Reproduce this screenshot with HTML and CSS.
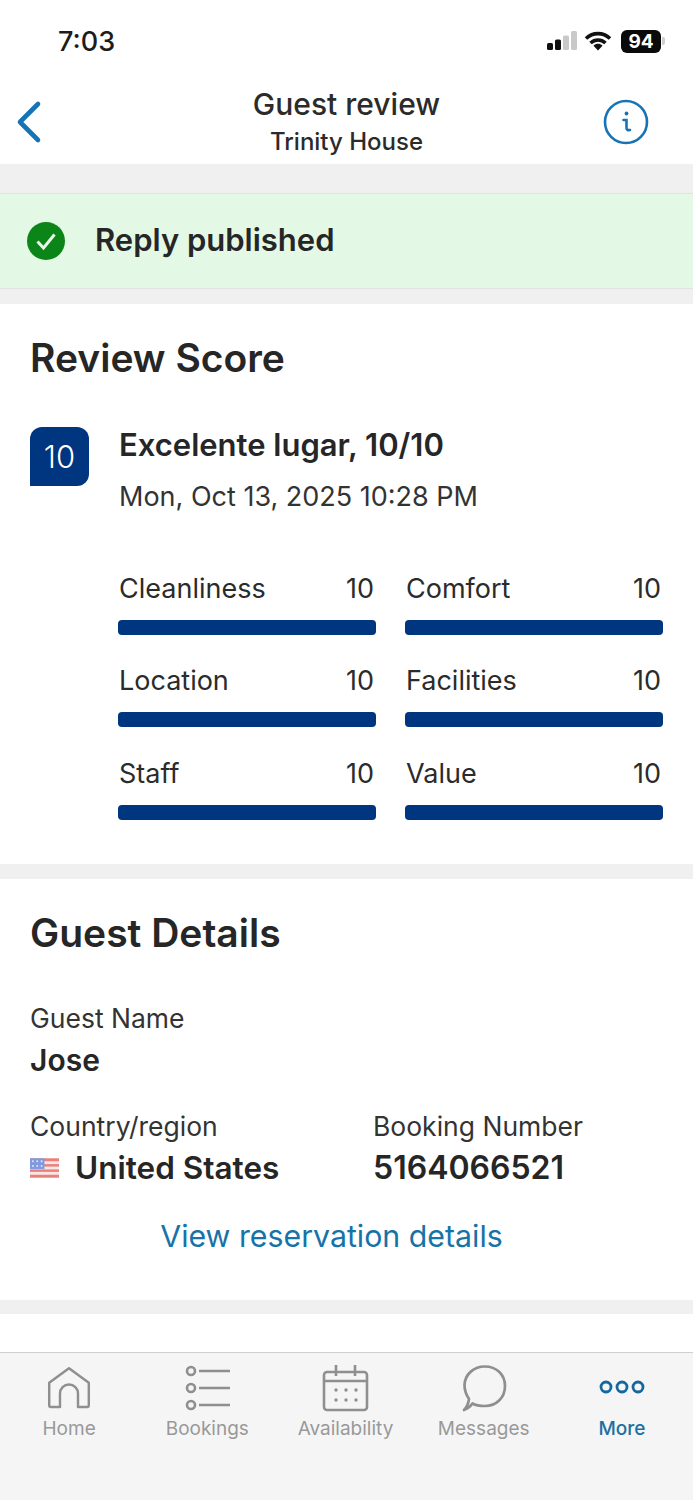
FILE: index.html
```html
<!DOCTYPE html>
<html lang="en">
<head>
<meta charset="utf-8">
<title>Guest review</title>
<link rel="stylesheet" href="styles.css">
</head>
<body>
<div class="app">
  <div class="status">
    <span class="time">7:03</span>
    <div class="status-icons">
      <svg class="signal" width="32" height="22" viewBox="0 0 32 22"><rect x="1" y="13" width="6" height="7" rx="1.5" fill="#111"/><rect x="9" y="9.500" width="6" height="10.500" rx="1.500" fill="#111"/><rect x="17" y="5.500" width="6" height="14.500" rx="1.500" fill="#c9c9c9"/><rect x="25" y="1" width="6" height="19" rx="1.500" fill="#c9c9c9"/></svg>
      <svg class="wifi" width="28" height="22" viewBox="0 0 28 22"><path d="M2 8.500C9 2 19 2 26 8.500M6.500 13C11 9 17 9 21.500 13" fill="none" stroke="#111" stroke-width="3.600"/><path d="M9.500 15.800C12 13.200 16 13.200 18.500 15.800L14 20.500Z" fill="#111"/></svg>
      <span class="battery">94</span>
      <span class="battery-tip"></span>
    </div>
  </div>
  <header class="nav">
    <svg class="back" width="30" height="46" viewBox="0 0 30 46"><path d="M25 5 L7 23 L25 41" fill="none" stroke="#1673b5" stroke-width="4.600" stroke-linecap="round" stroke-linejoin="round"/></svg>
    <div class="nav-title">
      <div class="nav-main">Guest review</div>
      <div class="nav-sub">Trinity House</div>
    </div>
    <svg class="info" width="46" height="46" viewBox="0 0 46 46"><circle cx="23" cy="23" r="21" fill="none" stroke="#1673b5" stroke-width="2.600"/><circle cx="23.500" cy="14.500" r="1.900" fill="#1673b5"/><path d="M20.500 21 H23.500 V29 Q23.500 31.500 27 31" fill="none" stroke="#1673b5" stroke-width="2.600" stroke-linecap="round"/></svg>
  </header>
  <div class="banner">
    <svg class="check" width="38" height="38" viewBox="0 0 38 38"><circle cx="19" cy="19" r="19" fill="#0c8518"/><path d="M10.500 19.500 L16.500 26 L27.500 12.500" fill="none" stroke="#e8f8e8" stroke-width="3"/></svg>
    <span class="banner-text">Reply published</span>
  </div>
  <section class="card score-card">
    <h2 class="card-title">Review Score</h2>
    <div class="review">
      <div class="badge">10</div>
      <div class="review-body">
        <div class="review-title">Excelente lugar, 10/10</div>
        <div class="review-date">Mon, Oct 13, 2025 10:28 PM</div>
        <div class="bars">
          <div class="metric"><div class="metric-head"><span>Cleanliness</span><span>10</span></div><div class="bar"></div></div>
          <div class="metric"><div class="metric-head"><span>Comfort</span><span>10</span></div><div class="bar"></div></div>
          <div class="metric"><div class="metric-head"><span>Location</span><span>10</span></div><div class="bar"></div></div>
          <div class="metric"><div class="metric-head"><span>Facilities</span><span>10</span></div><div class="bar"></div></div>
          <div class="metric"><div class="metric-head"><span>Staff</span><span>10</span></div><div class="bar"></div></div>
          <div class="metric"><div class="metric-head"><span>Value</span><span>10</span></div><div class="bar"></div></div>
        </div>
      </div>
    </div>
  </section>
  <section class="card details-card">
    <h2 class="card-title">Guest Details</h2>
    <div class="field name-field">
      <div class="field-label">Guest Name</div>
      <div class="field-value">Jose</div>
    </div>
    <div class="field-row">
      <div class="field">
        <div class="field-label">Country/region</div>
        <div class="field-value country">
          <svg class="flag" width="29" height="20" viewBox="0 0 30 20"><rect width="30" height="20" fill="#f7e6e2"/><g fill="#ea7f7c"><rect y="0" width="30" height="3"/><rect y="6" width="30" height="2.500"/><rect y="11.500" width="30" height="2.500"/><rect y="17" width="30" height="3"/></g><rect width="15" height="11" fill="#7f9be0"/><g fill="#dfe6f7"><circle cx="3" cy="3" r="1"/><circle cx="7.500" cy="3" r="1"/><circle cx="12" cy="3" r="1"/><circle cx="3" cy="8" r="1"/><circle cx="7.500" cy="8" r="1"/><circle cx="12" cy="8" r="1"/></g></svg>
          <span>United States</span>
        </div>
      </div>
      <div class="field">
        <div class="field-label">Booking Number</div>
        <div class="field-value booking">5164066521</div>
      </div>
    </div>
    <div class="link">View reservation details</div>
  </section>
  <div class="peek"></div>
  <nav class="tabs">
    <div class="tab">
      <svg width="50" height="48" viewBox="0 0 50 48"><path d="M3 18 L25 2 L47 18 V43 Q47 45 45 45 H35 V30 A10 10 0 0 0 15 30 V45 H5 Q3 45 3 43 Z" transform="translate(2.500 1.500) scale(.9)" fill="none" stroke="#8f8f8f" stroke-width="2.700" stroke-linejoin="round"/></svg>
      <span>Home</span>
    </div>
    <div class="tab">
      <svg width="50" height="48" viewBox="0 0 50 48"><g fill="none" stroke="#8f8f8f" stroke-width="2.600"><circle cx="9" cy="6" r="4"/><circle cx="9" cy="23" r="4"/><circle cx="9" cy="40" r="4"/><path d="M17 6 H48 M17 23 H48 M17 40 H48"/></g></svg>
      <span>Bookings</span>
    </div>
    <div class="tab">
      <svg width="50" height="48" viewBox="0 0 50 48"><g fill="none" stroke="#8f8f8f" stroke-width="2.600"><rect x="3" y="7" width="43" height="38" rx="3"/><path d="M3 16 H46 M15 0 V11 M34 0 V11"/></g><g fill="#8f8f8f"><circle cx="15" cy="25" r="1.700"/><circle cx="25" cy="25" r="1.700"/><circle cx="35" cy="25" r="1.700"/><circle cx="15" cy="35" r="1.700"/><circle cx="25" cy="35" r="1.700"/><circle cx="35" cy="35" r="1.700"/></g></svg>
      <span>Availability</span>
    </div>
    <div class="tab">
      <svg width="50" height="48" viewBox="0 0 50 48"><path d="M5 45 Q9 41 10 34 C6 28 5.500 24 5.500 20 C6 9 15 1.500 26 1.500 C37 1.500 46 9 46 21 C46 33 37 41 26 41 C21 41 16 40 13.500 38.500 C11 42 8 44 5 45 Z" fill="none" stroke="#8f8f8f" stroke-width="2.700" stroke-linejoin="round"/></svg>
      <span>Messages</span>
    </div>
    <div class="tab active">
      <svg width="50" height="48" viewBox="0 0 50 48"><g fill="none" stroke="#14689f" stroke-width="2.800"><circle cx="9" cy="22" r="5"/><circle cx="25" cy="22" r="5"/><circle cx="41" cy="22" r="5"/></g></svg>
      <span>More</span>
    </div>
  </nav>
</div>
</body>
</html>
```
FILE: styles.css
```css
* { box-sizing: border-box; }
html, body { margin: 0; padding: 0; }
body { font-family: Inter, "Liberation Sans", sans-serif; color: #262626; background: #fff; }
.app { width: 693px; height: 1500px; display: flex; flex-direction: column; overflow: hidden; background: #f0f0f0; }

.status { height: 82px; padding: 0 28px 0 58px; background: #fff; display: flex; align-items: center; justify-content: space-between; }
.time { font-size: 27px; font-weight: 500; color: #1c1c1c; }
.status-icons { display: flex; align-items: center; gap: 7px; }
.signal { margin-right: 1px; }
.wifi { margin-left: -2px; }
.battery { width: 40px; height: 23px; margin-left: 2px; border-radius: 6px; background: #0a0a0a; color: #fff; font-size: 19px; font-weight: 700; line-height: 23px; text-align: center; }
.battery-tip { width: 3px; height: 8px; margin-left: -6px; border-radius: 0 2px 2px 0; background: #cfcfcf; }

.nav { height: 82px; padding: 0 14px 2px 14px; background: #fff; display: grid; grid-template-columns: 1fr auto 1fr; align-items: center; }
.back { justify-self: start; margin-left: -1px; }
.info { justify-self: end; margin-right: 30px; }
.nav-title { text-align: center; }
.nav-main { font-size: 30px; font-weight: 500; line-height: 38px; color: #2b2b2b; }
.nav-sub { font-size: 24px; font-weight: 500; line-height: 36px; margin-top: 1px; color: #2b2b2b; }

.banner { height: 96px; margin: 29px 0 15px; padding: 0 0 4px 27px; display: flex; align-items: center; gap: 30px; background: #e3f8e5; border-top: 1px solid #e2e2e2; border-bottom: 1px solid #e2e2e2; }
.check { margin-top: 4px; }
.banner-text { font-size: 31px; font-weight: 600; color: #262626; }

.card { background: #fff; padding: 0 30px; }
.card-title { margin: 0; font-size: 39px; font-weight: 600; line-height: 46px; color: #262626; }
.score-card { height: 560px; padding-top: 31px; margin-bottom: 15px; }
.review { display: flex; gap: 29px; margin-top: 46px; }
.badge { width: 59px; height: 59px; flex: none; border-radius: 12px 12px 12px 0; background: #003580; color: #fff; font-size: 31px; font-weight: 300; line-height: 59px; text-align: center; }
.review-title { font-size: 31px; font-weight: 600; line-height: 38px; margin: -1px 0 0 1px; color: #262626; }
.review-date { font-size: 27px; line-height: 36px; margin: 15px 0 0 1px; color: #333; }
.bars { display: grid; grid-template-columns: 258px 258px; column-gap: 29px; row-gap: 28.300px; margin-top: 56px; }
.metric-head { display: flex; justify-content: space-between; padding: 0 2px 0 1px; font-size: 27px; line-height: 36px; color: #2b2b2b; }
.bar { height: 15px; margin-top: 13px; border-radius: 4px; background: #003580; }

.details-card { height: 421px; padding-top: 31px; margin-bottom: 14px; }
.name-field { margin-top: 44px; }
.field-label { font-size: 26.500px; line-height: 36px; color: #333; }
.field-value { font-size: 30px; font-weight: 600; line-height: 40px; margin-top: 4px; color: #262626; }
.field-row { display: grid; grid-template-columns: 343px 1fr; margin-top: 28px; }
.country { display: flex; align-items: center; gap: 16px; font-size: 31.500px; }
.booking { font-size: 32px; }
.flag { flex: none; margin-top: -1px; }
.link { margin-top: 28px; padding-right: 30px; text-align: center; font-size: 30.300px; line-height: 40px; color: #1673a8; }

.peek { height: 38px; background: #fff; flex: none; }
.tabs { flex: 1; display: flex; padding: 12px 2px 0 0; background: #f5f5f5; border-top: 1px solid #cfcfcf; }
.tab { flex: 1; display: flex; flex-direction: column; align-items: center; gap: 3px; font-size: 19px; line-height: 26px; color: #999; }
.tab.active { color: #1b6fa3; font-weight: 500; }
```
